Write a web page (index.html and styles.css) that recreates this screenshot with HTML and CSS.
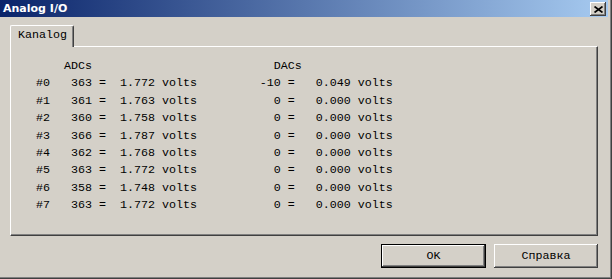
FILE: index.html
```html
<!DOCTYPE html>
<html>
<head>
<meta charset="utf-8">
<title>Analog I/O</title>
<link rel="stylesheet" href="styles.css">
</head>
<body>
<div class="window">
  <div class="titlebar">
    <span class="title">Analog I/O</span>
    <button class="close" aria-label="Close">
      <svg width="9" height="7" viewBox="0 0 9 7"><path d="M0.5 0.5L8.5 6.5M8.5 0.5L0.5 6.5" stroke="#000" stroke-width="1.7" fill="none"/></svg>
    </button>
  </div>
  <div class="body">
    <div class="tabs">
      <div class="tab active">Kanalog</div>
    </div>
    <div class="panel">
      <div class="readout">
        <div class="row">    ADCs                          DACs</div>
        <div class="row">#0   363 =  1.772 volts         -10 =   0.049 volts</div>
        <div class="row">#1   361 =  1.763 volts           0 =   0.000 volts</div>
        <div class="row">#2   360 =  1.758 volts           0 =   0.000 volts</div>
        <div class="row">#3   366 =  1.787 volts           0 =   0.000 volts</div>
        <div class="row">#4   362 =  1.768 volts           0 =   0.000 volts</div>
        <div class="row">#5   363 =  1.772 volts           0 =   0.000 volts</div>
        <div class="row">#6   358 =  1.748 volts           0 =   0.000 volts</div>
        <div class="row">#7   363 =  1.772 volts           0 =   0.000 volts</div>
      </div>
    </div>
    <div class="actions">
      <button class="btn default">OK</button>
      <button class="btn">Справка</button>
    </div>
  </div>
</div>
</body>
</html>
```
FILE: styles.css
```css
html, body {
  margin: 0;
  padding: 0;
  background: #d4d0c8;
}

.window {
  box-sizing: border-box;
  width: 612px;
  height: 279px;
  padding-right: 4px;
  background: #d4d0c8;
  box-shadow: inset -1px -1px #404040, inset -2px -2px #808080;
  font-family: "Liberation Mono", "Courier New", monospace;
  font-size: 11.67px;
  color: #000;
}

.titlebar {
  height: 17px;
  display: flex;
  align-items: flex-start;
  justify-content: space-between;
  background: linear-gradient(to right, #0a246a, #a6caf0);
}

.title {
  font-family: "DejaVu Sans", "Liberation Sans", sans-serif;
  font-weight: bold;
  font-size: 11px;
  line-height: 17px;
  color: #fff;
  padding-left: 3px;
}

.close {
  box-sizing: border-box;
  width: 16px;
  height: 14px;
  margin: 2px 2px 0 0;
  padding: 0;
  border: none;
  background: #d4d0c8;
  box-shadow: inset -1px -1px #404040, inset 1px 1px #fff, inset -2px -2px #808080;
  display: flex;
  align-items: center;
  justify-content: center;
}

.close svg {
  display: block;
  margin-left: 1px;
}

.body {
  padding: 8px 10px 0 10px;
}

.tabs {
  display: flex;
  position: relative;
  z-index: 1;
  margin-bottom: -1px;
}

.tab {
  box-sizing: border-box;
  width: 64px;
  height: 22px;
  padding: 1px 0 0 7px;
  line-height: 17px;
  background: #d4d0c8;
  border-top: 1px solid #fff;
  border-left: 1px solid #fff;
  border-right: 1px solid #404040;
  box-shadow: inset -1px 0 #808080;
  border-top-left-radius: 2px;
  border-top-right-radius: 2px;
}

.panel {
  box-sizing: border-box;
  height: 190px;
  padding: 11px 0 0 25px;
  border-top: 1px solid #fff;
  border-left: 1px solid #fff;
  border-right: 1px solid #404040;
  border-bottom: 1px solid #404040;
  box-shadow: inset -1px -1px #808080;
}

.row {
  white-space: pre;
  line-height: 17.37px;
}

.actions {
  display: flex;
  justify-content: flex-end;
  gap: 8px;
  margin-top: 8px;
}

.btn {
  box-sizing: border-box;
  height: 24px;
  width: 104px;
  padding: 0;
  border: none;
  background: #d4d0c8;
  font-family: "Liberation Mono", "Courier New", monospace;
  font-size: 11.67px;
  color: #000;
  box-shadow: inset -1px -1px #404040, inset 1px 1px #fff, inset -2px -2px #808080;
}

.btn.default {
  width: 105px;
  border: 1px solid #000;
}
```
